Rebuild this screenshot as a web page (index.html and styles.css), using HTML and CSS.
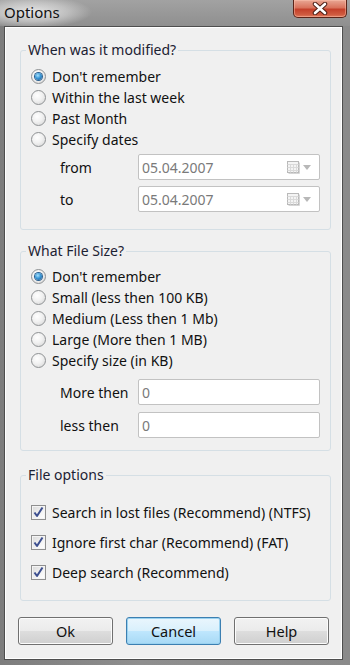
FILE: index.html
```html
<!DOCTYPE html>
<html>
<head>
<meta charset="utf-8">
<link rel="stylesheet" href="styles.css">
</head>
<body>
<div class="window">
  <div class="titlebar">
    <span class="title">Options</span>
    <div class="close">
      <svg width="20" height="13" viewBox="0 0 20 13">
        <path d="M5 2 L15 11 M15 2 L5 11" stroke="#4a1d14" stroke-width="4.5" stroke-linecap="round"/>
        <path d="M5 2 L15 11 M15 2 L5 11" stroke="#ffffff" stroke-width="2.6" stroke-linecap="round"/>
      </svg>
    </div>
  </div>
  <div class="client">
    <fieldset class="group g1">
      <legend>When was it modified?</legend>
      <label class="opt"><span class="radio checked"></span>Don't remember</label>
      <label class="opt"><span class="radio"></span>Within the last week</label>
      <label class="opt"><span class="radio"></span>Past Month</label>
      <label class="opt"><span class="radio"></span>Specify dates</label>
      <div class="field-row fr-from">
        <span class="flabel">from</span>
        <div class="input date">
          <span class="val">05.04.2007</span>
          <span class="cal"><svg width="15" height="14" viewBox="0 0 15 14"><rect x="1.5" y="1.5" width="11" height="11" fill="#f4f4f4" stroke="#b9b9b9"/><path d="M1.5 4.5 H12.5 M1.5 7.5 H12.5 M1.5 10.5 H12.5 M4.5 4.5 V12.5 M7.5 4.5 V12.5 M10.5 4.5 V12.5" stroke="#dadada"/><path d="M13.5 2.5 V13.5 H2.5" stroke="#d6d6d6" fill="none"/></svg></span>
          <span class="arrow"></span>
        </div>
      </div>
      <div class="field-row fr-to">
        <span class="flabel">to</span>
        <div class="input date">
          <span class="val">05.04.2007</span>
          <span class="cal"><svg width="15" height="14" viewBox="0 0 15 14"><rect x="1.5" y="1.5" width="11" height="11" fill="#f4f4f4" stroke="#b9b9b9"/><path d="M1.5 4.5 H12.5 M1.5 7.5 H12.5 M1.5 10.5 H12.5 M4.5 4.5 V12.5 M7.5 4.5 V12.5 M10.5 4.5 V12.5" stroke="#dadada"/><path d="M13.5 2.5 V13.5 H2.5" stroke="#d6d6d6" fill="none"/></svg></span>
          <span class="arrow"></span>
        </div>
      </div>
    </fieldset>

    <fieldset class="group g2">
      <legend>What File Size?</legend>
      <label class="opt"><span class="radio checked"></span>Don't remember</label>
      <label class="opt"><span class="radio"></span>Small (less then 100 KB)</label>
      <label class="opt"><span class="radio"></span>Medium (Less then 1 Mb)</label>
      <label class="opt"><span class="radio"></span>Large (More then 1 MB)</label>
      <label class="opt"><span class="radio"></span>Specify size (in KB)</label>
      <div class="field-row fr-more">
        <span class="flabel">More then</span>
        <div class="input"><span class="val">0</span></div>
      </div>
      <div class="field-row fr-less">
        <span class="flabel">less then</span>
        <div class="input"><span class="val">0</span></div>
      </div>
    </fieldset>

    <fieldset class="group g3">
      <legend>File options</legend>
      <label class="chk"><span class="box"><svg width="13" height="13" viewBox="0 0 13 13"><path d="M2.5 6.5 L5 10 L10.5 1.5" stroke="#3d4f8f" stroke-width="2" fill="none" stroke-linejoin="round"/></svg></span>Search in lost files (Recommend) (NTFS)</label>
      <label class="chk"><span class="box"><svg width="13" height="13" viewBox="0 0 13 13"><path d="M2.5 6.5 L5 10 L10.5 1.5" stroke="#3d4f8f" stroke-width="2" fill="none" stroke-linejoin="round"/></svg></span>Ignore first char (Recommend) (FAT)</label>
      <label class="chk"><span class="box"><svg width="13" height="13" viewBox="0 0 13 13"><path d="M2.5 6.5 L5 10 L10.5 1.5" stroke="#3d4f8f" stroke-width="2" fill="none" stroke-linejoin="round"/></svg></span>Deep search (Recommend)</label>
    </fieldset>

    <div class="buttons">
      <button class="btn">Ok</button>
      <button class="btn focus">Cancel</button>
      <button class="btn">Help</button>
    </div>
  </div>
</div>
</body>
</html>
```

FILE: styles.css
```css
* { box-sizing: border-box; }
html, body { margin: 0; padding: 0; }
body {
  width: 350px;
  height: 665px;
  overflow: hidden;
  font-family: "Noto Sans", "Open Sans", sans-serif;
  font-size: 14px;
  color: #111;
  background: linear-gradient(to right, #7d7d7d, #8e8e8e 40%, #8a8a8a);
}
.window {
  display: flex;
  flex-direction: column;
  height: 665px;
}
.titlebar {
  height: 26px;
  display: flex;
  align-items: flex-start;
  justify-content: space-between;
  background:
    radial-gradient(ellipse 60px 16px at 32px 12px, rgba(235,235,235,0.95), rgba(215,215,215,0.6) 60%, rgba(200,200,200,0) 100%),
    linear-gradient(to bottom, #a2a2a2, #8f8f8f);
}
.title {
  font-size: 15px;
  color: #111;
  margin: 3px 0 0 4px;
  line-height: 18px;
}
.close {
  width: 54px;
  height: 18px;
  margin-right: 3px;
  border: 1px solid #5b2418;
  border-top: none;
  border-radius: 0 0 5px 5px;
  background: linear-gradient(to bottom, #e9a794 0%, #d9735c 45%, #c4402a 55%, #cf5a3f 85%, #e07b5e 100%);
  box-shadow: inset 0 0 0 1px rgba(255,200,180,0.45);
  display: flex;
  align-items: center;
  justify-content: center;
}
.client {
  margin: 0 7px 5px 4px;
  height: 634px;
  background: #f0f0f0;
  border: 1px solid #4e4e4e;
  box-shadow: inset 0 0 0 1px #ffffff;
  padding: 15px 0 0 15px;
}
.group {
  width: 311px;
  margin: 0;
  border: 1px solid #d5dfe5;
  border-radius: 3px;
  padding: 0 10px 0 10px;
  min-width: 0;
}
.group legend {
  color: #1c2233;
  font-size: 14px;
  line-height: 16px;
  padding: 0 2px;
  margin-left: -5px;
}
.g1 { padding-top: 8px; padding-bottom: 17px; }
.g2 { margin-top: 13px; padding-top: 7px; padding-bottom: 12px; }
.g3 { margin-top: 16px; padding-top: 14px; padding-bottom: 13px; }

.opt, .chk {
  display: flex;
  align-items: center;
  height: 21px;
  white-space: nowrap;
}
.chk { height: 30px; }
.radio {
  width: 15px;
  height: 15px;
  border-radius: 50%;
  border: 1px solid #8f9294;
  background: radial-gradient(circle at 40% 35%, #ffffff 0%, #f1f1f1 45%, #d2d2d2 100%);
  margin-right: 6px;
  flex: none;
  display: flex;
  align-items: center;
  justify-content: center;
}
.radio.checked::after {
  content: "";
  width: 7px;
  height: 7px;
  border-radius: 50%;
  background: radial-gradient(circle at 40% 35%, #a6e0fb 0%, #3b99d8 45%, #1a4f86 100%);
  box-shadow: 0 0 0 1px #2a5f8f;
}
.box {
  width: 15px;
  height: 15px;
  border: 1px solid #8f8f8f;
  background: linear-gradient(135deg, #d9d9d9, #f7f7f7 70%, #ffffff);
  box-shadow: inset 0 0 0 1px #f4f4f4;
  margin-right: 6px;
  flex: none;
  display: flex;
  align-items: center;
  justify-content: center;
}
.field-row {
  display: flex;
  align-items: center;
  height: 26px;
}
.fr-from { margin-top: 4px; }
.fr-to { margin-top: 6px; }
.fr-more { margin-top: 8px; }
.fr-less { margin-top: 7px; }
.flabel {
  width: 78px;
  margin-left: 29px;
}
.input {
  width: 182px;
  height: 26px;
  background: #ffffff;
  border: 1px solid #c2c2c2;
  border-radius: 2px;
  display: flex;
  align-items: center;
  padding-left: 3px;
  color: #7a7a7a;
}
.input .val { flex: 1; }
.cal { display: flex; margin-right: 2px; }
.arrow {
  width: 0;
  height: 0;
  border-left: 4.5px solid transparent;
  border-right: 4.5px solid transparent;
  border-top: 5px solid #b8b8b8;
  margin-right: 8px;
}
.buttons {
  display: flex;
  gap: 13px;
  margin-top: 16px;
  margin-left: -2px;
}
.btn {
  width: 95px;
  height: 28px;
  font-family: inherit;
  font-size: 14.5px;
  color: #111;
  border: 1px solid #707070;
  border-radius: 3px;
  background: linear-gradient(to bottom, #f2f2f2 0%, #ebebeb 48%, #dddddd 52%, #cfcfcf 100%);
  box-shadow: inset 0 0 0 1px #fcfcfc;
  padding: 0;
}
.btn.focus {
  border-color: #3c7fb1;
  background: linear-gradient(to bottom, #eaf6fd 0%, #d9f0fc 48%, #bee6fd 52%, #a7d9f5 100%);
  box-shadow: inset 0 0 0 1px #9ad2f0;
}
```
